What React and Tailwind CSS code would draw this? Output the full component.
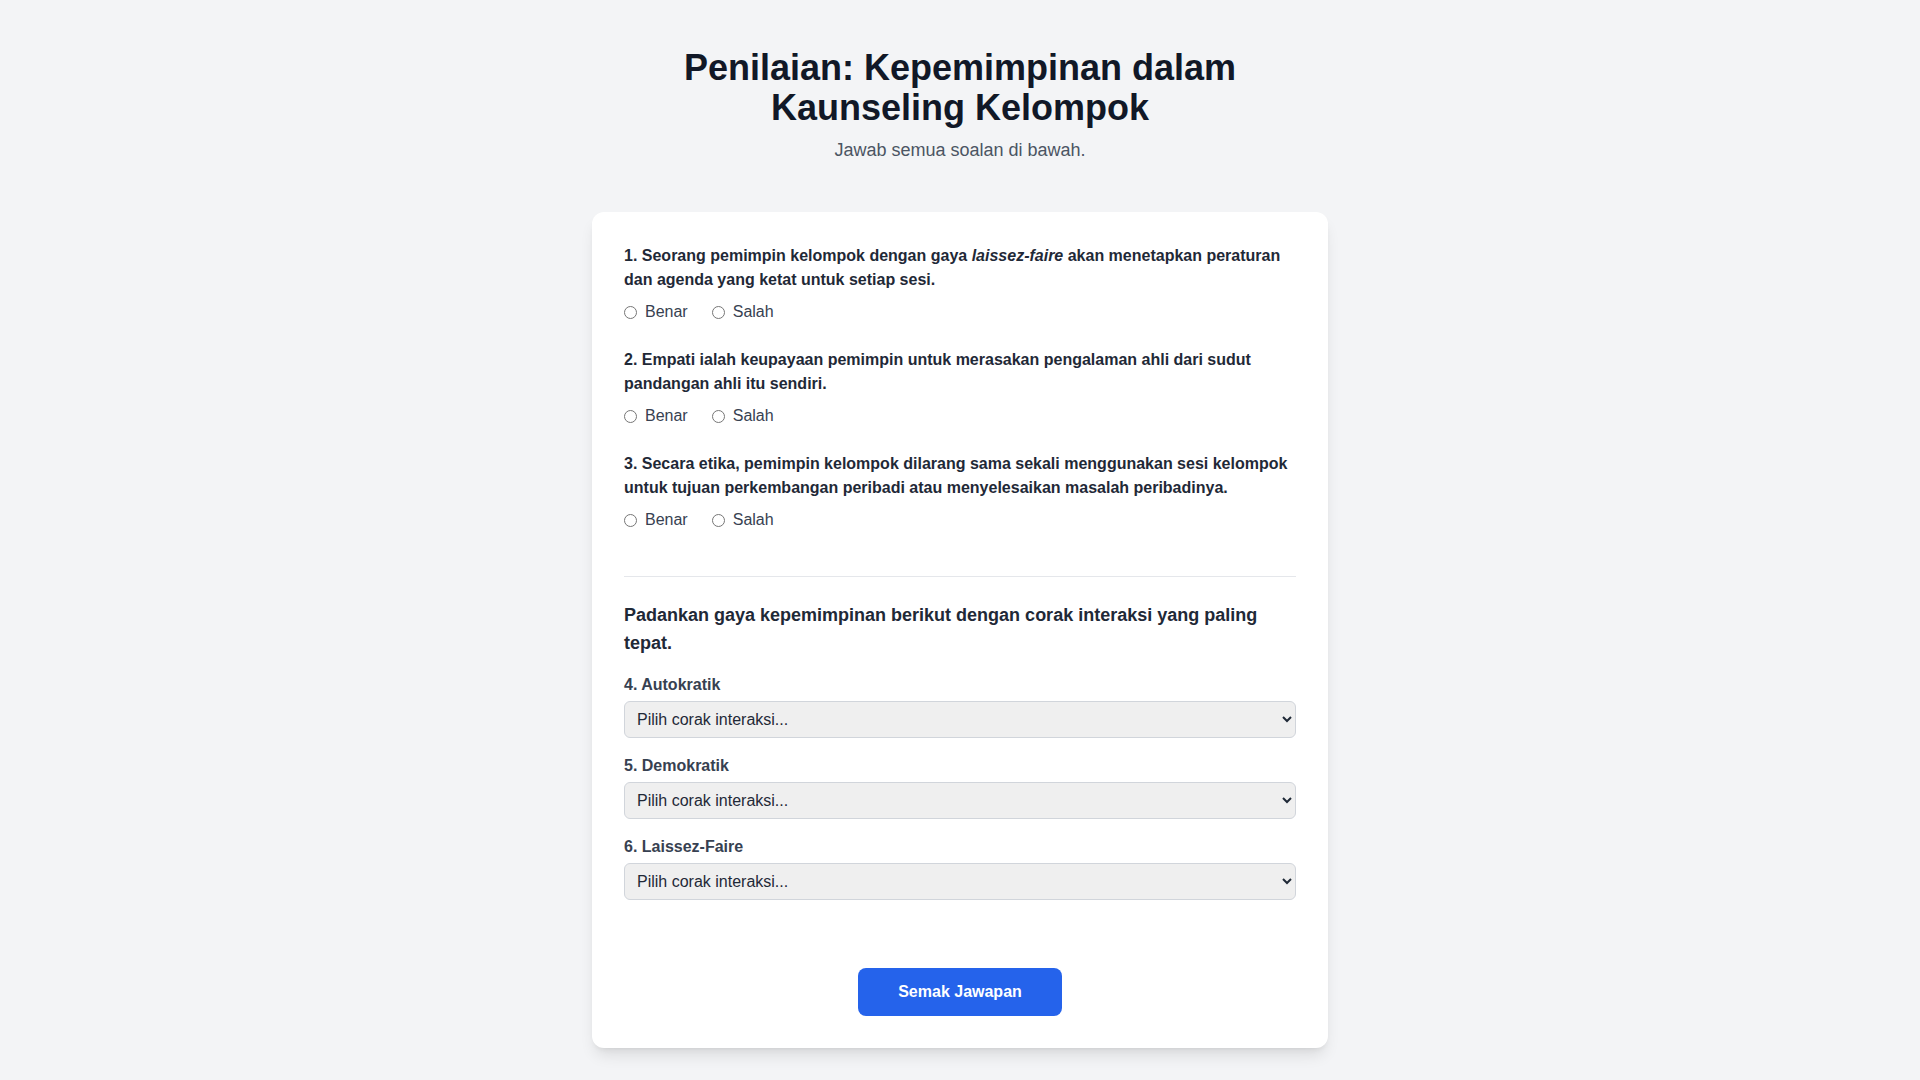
import { useState } from 'react';

const QUESTIONS = [
  {
    id: 'q1',
    text: (
      <>
        1. Seorang pemimpin kelompok dengan gaya <em>laissez-faire</em> akan menetapkan peraturan dan agenda yang
        ketat untuk setiap sesi.
      </>
    ),
  },
  {
    id: 'q2',
    text: '2. Empati ialah keupayaan pemimpin untuk merasakan pengalaman ahli dari sudut pandangan ahli itu sendiri.',
  },
  {
    id: 'q3',
    text: '3. Secara etika, pemimpin kelompok dilarang sama sekali menggunakan sesi kelompok untuk tujuan perkembangan peribadi atau menyelesaikan masalah peribadinya.',
  },
];

const MATCHES = [
  { id: 'q4', label: '4. Autokratik' },
  { id: 'q5', label: '5. Demokratik' },
  { id: 'q6', label: '6. Laissez-Faire' },
];

const OPTIONS = [
  'Pemimpin membuat semua keputusan',
  'Ahli terlibat dalam membuat keputusan',
  'Ahli bebas tanpa arahan pemimpin',
];

export default function App() {
  const [answers, setAnswers] = useState({});

  const setAnswer = (id, value) => setAnswers((prev) => ({ ...prev, [id]: value }));

  return (
    <div className="min-h-screen bg-[#f3f4f6] font-['Liberation_Sans',Arial,sans-serif]">
      <div className="max-w-3xl mx-auto px-4 py-12">
        {/* Header */}
        <header className="text-center mb-12">
          <h1 className="text-4xl font-bold text-[#111827]">Penilaian: Kepemimpinan dalam Kaunseling Kelompok</h1>
          <p className="mt-2 text-lg text-[#4b5563]">Jawab semua soalan di bawah.</p>
        </header>

        <div className="bg-white rounded-xl shadow-lg p-8">
          {/* True / false */}
          <div className="space-y-6">
            {QUESTIONS.map((q) => (
              <div key={q.id}>
                <p className="mb-2 font-semibold text-[#1f2937]">{q.text}</p>
                <div className="flex items-center gap-6">
                  {['Benar', 'Salah'].map((opt) => (
                    <label key={opt} className="flex items-center cursor-pointer">
                      <input
                        type="radio"
                        name={q.id}
                        value={opt}
                        checked={answers[q.id] === opt}
                        onChange={() => setAnswer(q.id, opt)}
                      />
                      <span className="ml-2 text-[#374151]">{opt}</span>
                    </label>
                  ))}
                </div>
              </div>
            ))}
          </div>

          {/* Matching */}
          <div className="mt-11 pt-6 border-t border-[#e5e7eb]">
            <h2 className="mb-4 text-lg font-semibold text-[#1f2937]">
              Padankan gaya kepemimpinan berikut dengan corak interaksi yang paling tepat.
            </h2>
            <div className="space-y-4">
              {MATCHES.map((m) => (
                <div key={m.id}>
                  <label htmlFor={m.id} className="block mb-1 font-semibold text-[#374151]">
                    {m.label}
                  </label>
                  <select
                    id={m.id}
                    value={answers[m.id] || ''}
                    onChange={(e) => setAnswer(m.id, e.target.value)}
                    className="w-full p-2 border border-[#d1d5db] rounded-md bg-[#efefef] text-[#1f2937]"
                  >
                    <option value="">Pilih corak interaksi...</option>
                    {OPTIONS.map((o) => (
                      <option key={o} value={o}>{o}</option>
                    ))}
                  </select>
                </div>
              ))}
            </div>
          </div>

          <div className="mt-17 text-center">
            <button className="bg-[#2563eb] text-white font-bold py-3 px-10 rounded-lg hover:bg-[#1d4ed8]">
              Semak Jawapan
            </button>
          </div>
        </div>
      </div>
    </div>
  );
}
